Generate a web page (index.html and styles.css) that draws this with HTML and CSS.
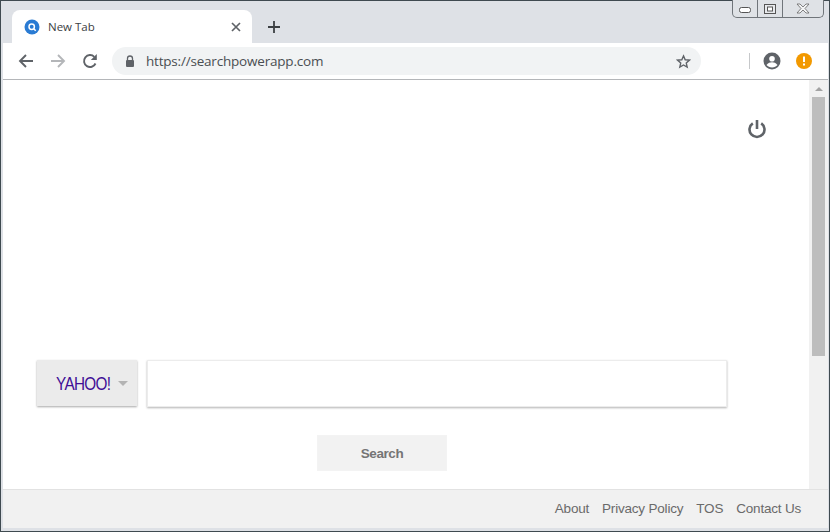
FILE: index.html
```html
<!DOCTYPE html>
<html lang="en">
<head>
<meta charset="utf-8">
<title>New Tab</title>
<link rel="stylesheet" href="styles.css">
</head>
<body>
<div class="window">
  <div class="caps">
    <span class="cap cap-min"><svg width="12" height="7" viewBox="0 0 12 7"><rect x="0.5" y="0.5" width="11" height="5" rx="2" fill="#fff" stroke="#555"/></svg></span>
    <span class="cap cap-max"><svg width="12" height="10" viewBox="0 0 12 10"><rect x="0.5" y="0.5" width="11" height="9" fill="#e8eaed" stroke="#555"/><rect x="3.5" y="3" width="5" height="4" fill="#fff" stroke="#555"/></svg></span>
    <span class="cap cap-close"><svg width="14" height="11" viewBox="0 0 14 11"><path d="M1 1h3l3 3 3-3h3L9 5.500l4 4.500h-3L7 7 4 10H1l4-4.500z" fill="#f4f5f6" stroke="#666" stroke-width="0.800"/></svg></span>
  </div>
  <div class="tabstrip">
    <div class="tab">
      <svg class="favicon" width="16" height="16" viewBox="0 0 16 16"><circle cx="8" cy="8" r="7.500" fill="#2a7bd3"/><circle cx="7.700" cy="7.700" r="2.700" fill="none" stroke="#fff" stroke-width="1.500"/><path d="M9.700 9.700l2 2" stroke="#fff" stroke-width="1.500"/></svg>
      <span class="tab-title">New Tab</span>
      <svg class="tab-close" width="10" height="10" viewBox="0 0 10 10"><path d="M1 1l8 8M9 1l-8 8" stroke="#5f6368" stroke-width="1.700"/></svg>
    </div>
    <svg class="new-tab" width="12" height="12" viewBox="0 0 12 12"><path d="M6 0v12M0 6h12" stroke="#3c4043" stroke-width="1.800"/></svg>
  </div>
  <div class="toolbar">
    <svg class="nav" width="16" height="16" viewBox="0 0 16 16"><path d="M15 8H2M8 2L2 8l6 6" fill="none" stroke="#5f6368" stroke-width="1.900"/></svg>
    <svg class="nav" width="16" height="16" viewBox="0 0 16 16"><path d="M1 8h13M8 2l6 6-6 6" fill="none" stroke="#b4b6b9" stroke-width="1.900"/></svg>
    <svg class="nav" width="16" height="16" viewBox="0 0 16 16"><path d="M13.500 10.500A6 6 0 1 1 12.300 3.800" fill="none" stroke="#5f6368" stroke-width="1.900"/><path d="M14.800 1v6h-6z" fill="#5f6368"/></svg>
    <div class="omnibox">
      <svg class="lock" width="10" height="13" viewBox="0 0 10 13"><path d="M2.500 5V3.500a2.500 2.500 0 0 1 5 0V5" fill="none" stroke="#5f6368" stroke-width="1.300"/><rect x="1" y="5" width="8" height="7" rx="1" fill="#5f6368"/></svg>
      <span class="url">https://searchpowerapp.com</span>
      <svg class="star" width="15" height="15" viewBox="0 0 24 24"><path d="M12 3l2.700 6.200 6.800.6-5.100 4.500 1.500 6.700L12 17.500 6.100 21l1.500-6.700L2.500 9.800l6.800-.6z" fill="none" stroke="#5f6368" stroke-width="2.200"/></svg>
    </div>
    <span class="divider"></span>
    <svg class="avatar" width="18" height="18" viewBox="0 0 18 18"><circle cx="9" cy="9" r="8.500" fill="#5f6368"/><circle cx="9" cy="6.800" r="2.800" fill="#fff"/><path d="M3.500 13c1.500-2 3.500-2.700 5.500-2.700s4 .7 5.500 2.700c-1.300 1.500-3.300 2.400-5.500 2.400s-4.200-.9-5.500-2.400z" fill="#fff"/></svg>
    <svg class="alert" width="16" height="16" viewBox="0 0 16 16"><circle cx="8" cy="8" r="8" fill="#f29900"/><path d="M8 3.500v5.500" stroke="#fff" stroke-width="2"/><rect x="7" y="10.500" width="2" height="2" fill="#fff"/></svg>
  </div>
  <div class="viewport">
    <div class="page">
      <main class="content">
        <div class="power-row">
          <svg width="20" height="20" viewBox="0 0 20 20"><path d="M10 1v9" stroke="#5f6368" stroke-width="2.600" fill="none"/><path d="M5.800 4.300a7.500 7.500 0 1 0 8.400 0" stroke="#5f6368" stroke-width="2.600" fill="none"/></svg>
        </div>
        <div class="search-row">
          <div class="engine">
            <span class="yahoo">YAHOO!</span>
            <span class="caret"></span>
          </div>
          <div class="query"></div>
        </div>
        <div class="button-row">
          <button class="search-btn" type="button">Search</button>
        </div>
      </main>
      <div class="scrollbar">
        <span class="arrow"></span>
        <span class="thumb"></span>
      </div>
    </div>
    <footer class="footer">
      <a class="link">About</a>
      <a class="link">Privacy Policy</a>
      <a class="link">TOS</a>
      <a class="link">Contact Us</a>
    </footer>
  </div>
</div>
</body>
</html>
```
FILE: styles.css
```css
* { box-sizing: border-box; }
html, body { margin: 0; padding: 0; }
body { width: 830px; height: 532px; overflow: hidden; font-family: "Liberation Sans", Arial, sans-serif; background: #dee1e6; }
.window { position: relative; width: 830px; height: 532px; display: flex; flex-direction: column; background: #dee1e6; border: 1px solid #3f4a50; padding: 0 1px 3px 2px; }
.caps { position: absolute; top: -1px; left: 731px; width: 92px; height: 18px; display: flex; border: 1px solid #70757a; border-top: 0; border-radius: 0 0 5px 5px; background: #dfe2e6; }
.cap { display: flex; align-items: center; justify-content: center; height: 100%; }
.cap-min { width: 25px; border-right: 1px solid #70757a; padding-top: 4px; }
.cap-max { width: 25px; border-right: 1px solid #70757a; }
.cap-close { flex: 1; }
.tabstrip { height: 42px; display: flex; align-items: flex-end; padding-left: 9px; flex: none; }
.tab { width: 240px; height: 33px; background: #fff; border-radius: 8px 8px 0 0; display: flex; align-items: center; padding: 0 11px 0 12px; }
.favicon { flex: none; }
.tab-title { margin-left: 8px; font-size: 11.500px; color: #3c4043; flex: 1; font-family: "Open Sans", sans-serif; }
.tab-close { flex: none; }
.new-tab { margin: 0 0 10px 16px; }
.toolbar { height: 37px; flex: none; background: #fff; border-bottom: 1px solid #b4b6b9; display: flex; align-items: center; padding: 0 0 0 15px; }
.nav { margin-right: 16px; flex: none; }
.omnibox { margin-left: -2px; width: 589px; height: 28px; background: #f1f3f4; border-radius: 14px; display: flex; align-items: center; padding: 0 10px 0 13px; }
.lock { flex: none; }
.url { margin-left: 11px; flex: 1; font-size: 13.500px; color: #4a4e52; font-family: "Open Sans", sans-serif; letter-spacing: -0.200px; }
.divider { width: 1px; height: 16px; background: #c6c8ca; margin-left: 48px; }
.avatar { margin-left: 13px; flex: none; }
.alert { margin-left: 15px; flex: none; }
.viewport { flex: 1; display: flex; flex-direction: column; background: #fff; min-height: 0; }
.page { flex: 1; display: flex; min-height: 0; }
.content { flex: 1; display: flex; flex-direction: column; padding: 39px 0 0 0; }
.power-row { display: flex; justify-content: flex-end; padding-right: 42px; height: 20px; }
.search-row { display: flex; margin-top: 221px; padding-left: 34px; gap: 10px; }
.engine { width: 100px; height: 46px; background: #ebebeb; box-shadow: 0 1px 2px rgba(0,0,0,0.350); display: flex; align-items: center; padding: 3px 0 0 19px; }
.yahoo { font-size: 18px; color: #400e96; letter-spacing: -0.800px; transform: scaleX(0.850); transform-origin: left center; margin-right: -10px; }
.caret { width: 0; height: 0; border-left: 5px solid transparent; border-right: 5px solid transparent; border-top: 5px solid #b3b3b3; margin: 0 0 2px 8px; }
.query { width: 580px; height: 47px; background: #fff; border: 1px solid #ececec; box-shadow: 0 1px 2px rgba(0,0,0,0.300); }
.button-row { display: flex; padding-left: 314px; margin-top: 28px; }
.search-btn { width: 130px; height: 36px; border: 1px solid #f3f3f3; background: #f2f2f2; font: bold 13.500px "Liberation Sans", sans-serif; letter-spacing: -0.400px; color: #757575; padding: 0; }
.scrollbar { width: 19px; flex: none; background: #f1f1f1; display: flex; flex-direction: column; align-items: center; padding-top: 7px; }
.arrow { width: 0; height: 0; border-left: 4px solid transparent; border-right: 4px solid transparent; border-bottom: 4px solid #a3a3a3; }
.thumb { width: 13px; height: 259px; background: #bdbdbd; margin-top: 6px; }
.footer { height: 39px; flex: none; background: #f1f1f1; border-top: 1px solid #e2e2e2; display: flex; justify-content: flex-end; align-items: center; gap: 13px; padding: 0 27px 2px 0; }
.link { font-size: 13.500px; letter-spacing: -0.200px; color: #6a6a6a; }
```
